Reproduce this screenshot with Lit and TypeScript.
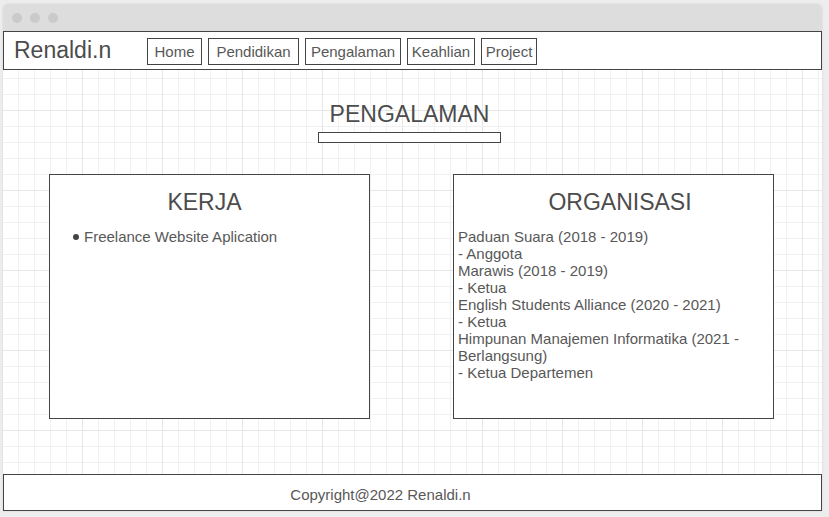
import { LitElement, html, css } from "lit";
import { customElement } from "lit/decorators.js";
import { styleMap } from "lit/directives/style-map.js";

interface NavItem {
  label: string;
  width: number;
}

interface Organisation {
  name: string;
  role: string;
}

const NAV: NavItem[] = [
  { label: "Home", width: 55 },
  { label: "Pendidikan", width: 91 },
  { label: "Pengalaman", width: 96 },
  { label: "Keahlian", width: 68 },
  { label: "Project", width: 56 },
];

const ORGANISATIONS: Organisation[] = [
  { name: "Paduan Suara (2018 - 2019)", role: "- Anggota" },
  { name: "Marawis (2018 - 2019)", role: "- Ketua" },
  { name: "English Students Alliance (2020 - 2021)", role: "- Ketua" },
  { name: "Himpunan Manajemen Informatika (2021 - Berlangsung)", role: "- Ketua Departemen" },
];

@customElement("app-root")
export class AppRoot extends LitElement {
  static styles = css`
    :host {
      display: flex;
      box-sizing: border-box;
      min-height: 100vh;
      padding: 4px 7px 6px 3px;
      background: #ededed;
      color: #585858;
      font: 15px/17px "Liberation Sans", Arial, sans-serif;
    }
    * {
      box-sizing: border-box;
    }
    h1,
    h2,
    p,
    ul {
      margin: 0;
      padding: 0;
    }
    ul {
      list-style: none;
    }
    .window {
      flex: 1;
      min-width: 0;
      display: flex;
      flex-direction: column;
      border-radius: 5px 5px 0 0;
      background: #fff;
      box-shadow: 0 0 2px #ccc;
    }
    .chrome {
      display: flex;
      align-items: center;
      gap: 8px;
      height: 27px;
      padding-left: 9px;
      border-radius: 5px 5px 0 0;
      background: #ddd;
    }
    .dot {
      width: 10px;
      height: 10px;
      border-radius: 50%;
      background: #cacaca;
    }
    .header,
    .footer,
    .card,
    .rule,
    .link {
      border: 1px solid #444;
      background: #fff;
    }
    .header {
      display: flex;
      align-items: flex-end;
      padding: 5px 10px 4px;
    }
    .brand,
    .title {
      color: #4c4c4c;
      font-size: 23px;
      line-height: 26px;
      font-weight: 400;
    }
    .brand {
      flex: 0 0 133px;
      padding-bottom: 2px;
      text-decoration: none;
    }
    .nav {
      display: flex;
      gap: 6px;
    }
    .link {
      display: flex;
      align-items: center;
      justify-content: center;
      height: 27px;
      color: inherit;
      text-decoration: none;
      white-space: nowrap;
    }
    .main {
      flex: 1;
      display: flex;
      flex-direction: column;
      gap: 31px;
      padding: 31px 48px 55px 46px;
      background-image: linear-gradient(to left, #e6e6e6 1px, transparent 1px),
        linear-gradient(to top, #e6e6e6 1px, transparent 1px),
        linear-gradient(to left, #f1f1f1 1px, transparent 1px),
        linear-gradient(to top, #f1f1f1 1px, transparent 1px);
      background-size: 80px 80px, 80px 80px, 16px 16px, 16px 16px;
      background-position: 0 0, 0 -39px, 0 0, 0 -7px;
    }
    .intro {
      display: flex;
      flex-direction: column;
      align-items: center;
      gap: 5px;
      padding-right: 4px;
    }
    .rule {
      width: 183px;
      height: 11px;
    }
    .cards {
      flex: 1;
      display: grid;
      grid-template-columns: 1fr 1fr;
      gap: 83px;
    }
    .card {
      display: flex;
      flex-direction: column;
      gap: 13px;
      padding: 14px 4px;
    }
    .card .title {
      text-align: center;
    }
    .work .title {
      padding-right: 10px;
    }
    .organisations .title {
      padding-left: 13px;
    }
    .job {
      display: flex;
      align-items: center;
      gap: 5px;
      padding-left: 19px;
    }
    .job::before {
      content: "";
      width: 6px;
      height: 6px;
      border-radius: 50%;
      background: #444;
    }
    .footer {
      padding: 11px 64px 7px 0;
      text-align: center;
    }
  `;

  render() {
    return html`
      <div class="window">
        <div class="chrome">
          <span class="dot"></span><span class="dot"></span><span class="dot"></span>
        </div>
        <header class="header">
          <a class="brand" href="#">Renaldi.n</a>
          <nav class="nav">
            ${NAV.map(
              (item) => html`<a
                class="link"
                href="#${item.label.toLowerCase()}"
                style=${styleMap({ width: `${item.width}px` })}
                >${item.label}</a
              >`
            )}
          </nav>
        </header>
        <main class="main">
          <div class="intro">
            <h1 class="title">PENGALAMAN</h1>
            <div class="rule"></div>
          </div>
          <div class="cards">
            <section class="card work">
              <h2 class="title">KERJA</h2>
              <ul>
                <li class="job">Freelance Website Aplication</li>
              </ul>
            </section>
            <section class="card organisations">
              <h2 class="title">ORGANISASI</h2>
              <ul>
                ${ORGANISATIONS.map(
                  (org) => html`<li>
                    <p>${org.name}</p>
                    <p>${org.role}</p>
                  </li>`
                )}
              </ul>
            </section>
          </div>
        </main>
        <footer class="footer">Copyright@2022 Renaldi.n</footer>
      </div>
    `;
  }
}
